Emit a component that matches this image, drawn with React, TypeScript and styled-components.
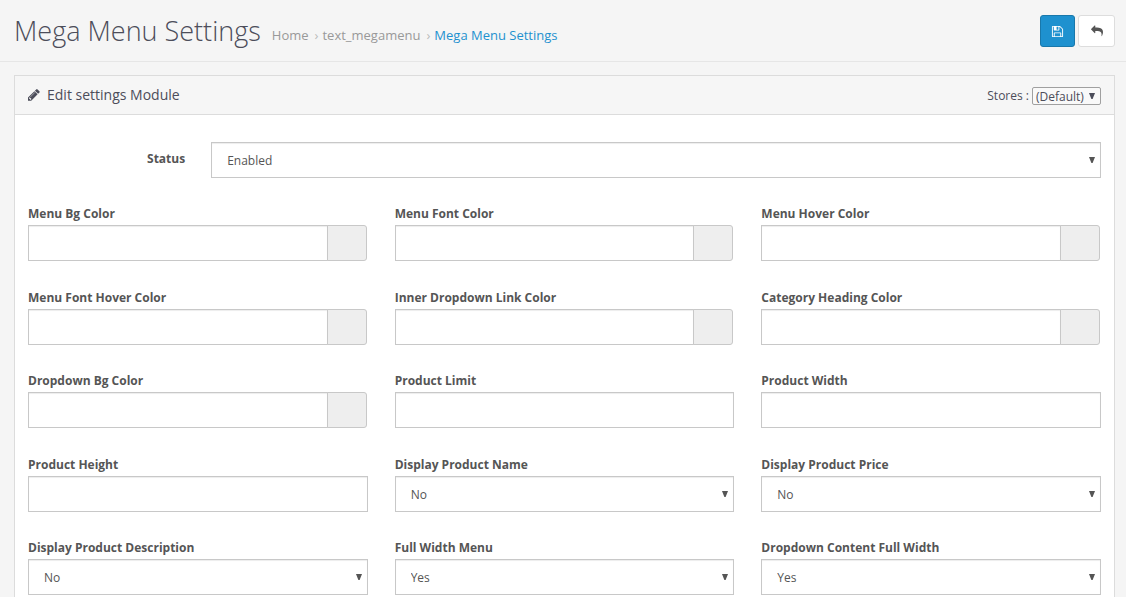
import React, { useId, useState } from "react";
import styled, { createGlobalStyle } from "styled-components";

const GlobalStyle = createGlobalStyle`
  *, *::before, *::after { box-sizing: border-box; }
  body {
    margin: 0;
    background: #f5f5f5;
    color: #4c4d5a;
    font-family: "Open Sans", "Noto Sans", sans-serif;
    font-size: 12px;
    line-height: 18px;
  }
  input, select, button { font-family: inherit; }
`;

const PageHeader = styled.header`
  display: flex;
  align-items: flex-start;
  justify-content: space-between;
  padding: 15px 11px 14px 14px;
  border-bottom: 1px solid #e6e6e6;
  margin-bottom: 13px;
`;

const Heading = styled.div`
  display: flex;
  flex-wrap: wrap;
  align-items: flex-start;
  column-gap: 11px;
`;

const Title = styled.h1`
  margin: 0;
  font-size: 27px;
  font-weight: 300;
  line-height: 32px;
`;

const Crumbs = styled.ol`
  display: flex;
  margin: 0;
  padding: 11px 0 0;
  list-style: none;
  font-size: 13px;
`;

const Crumb = styled.li`
  & + &::before {
    content: "›";
    padding: 0 4px 0 6px;
    color: #bbb;
  }
`;

const CrumbLink = styled.a<{ $current?: boolean }>`
  color: ${(p) => (p.$current ? "#1e91cf" : "#999")};
  text-decoration: none;
`;

const Actions = styled.div`
  display: flex;
  gap: 3px;
`;

const IconButton = styled.button<{ $primary?: boolean }>`
  display: flex;
  align-items: center;
  justify-content: center;
  width: ${(p) => (p.$primary ? 35 : 37)}px;
  height: 32px;
  padding: 0;
  border: 1px solid ${(p) => (p.$primary ? "#1978ab" : "#ddd")};
  border-radius: 3px;
  background: ${(p) => (p.$primary ? "#1e91cf" : "#fff")};
  color: ${(p) => (p.$primary ? "#fff" : "#555")};
  cursor: pointer;
`;

const Panel = styled.main`
  margin: 0 11px 0 14px;
  border: 1px solid #dcdcdc;
  background: #fff;
`;

const PanelHeading = styled.div`
  display: flex;
  align-items: center;
  justify-content: space-between;
  height: 39px;
  padding: 0 13px;
  border-bottom: 1px solid #dcdcdc;
  background: #f6f6f6;
`;

const PanelTitle = styled.h2`
  display: flex;
  align-items: center;
  gap: 7px;
  margin: 0;
  font-size: 14px;
  font-weight: 400;
  line-height: 20px;
`;

const StorePicker = styled.div`
  display: flex;
  align-items: center;
  gap: 3px;
  padding-top: 2px;
`;

const PanelBody = styled.form`
  padding: 27px 13px 14px;
`;

const StatusRow = styled.div`
  display: grid;
  grid-template-columns: 1fr 5fr;
  margin: 0 -13px 27px;

  > * {
    margin: 0 13px;
  }
`;

const StatusLabel = styled.label`
  padding-top: 8px;
  color: #555;
  font-weight: 700;
  text-align: right;
`;

const Fields = styled.div`
  display: grid;
  grid-template-columns: repeat(3, 1fr);
  grid-auto-rows: 84px 83px;
  column-gap: 27px;
`;

const FieldBox = styled.div`
  min-width: 0;
`;

const FieldLabel = styled.label`
  display: block;
  margin-bottom: 2px;
  color: #555;
  font-weight: 700;
`;

const TextInput = styled.input`
  display: block;
  flex: 1;
  width: 100%;
  min-width: 0;
  height: 36px;
  padding: 8px 13px;
  border: 1px solid #c8c8c8;
  border-radius: 0;
  background: #fff;
  box-shadow: inset 0 1px 1px rgba(0, 0, 0, 0.075);
  color: #555;
  font-size: 12px;
`;

const ColorGroup = styled.div`
  display: flex;
  padding-right: 1px;
`;

const Swatch = styled.span`
  width: 40px;
  height: 36px;
  margin-left: -1px;
  border: 1px solid #c8c8c8;
  border-radius: 0 3px 3px 0;
  background: #eee;
  z-index: 1;
`;

const SelectWrap = styled.div<{ $compact?: boolean }>`
  position: relative;
  color: ${(p) => (p.$compact ? "#4c4d5a" : "#555")};

  svg {
    position: absolute;
    top: ${(p) => (p.$compact ? 6 : 15)}px;
    right: 6px;
    pointer-events: none;
  }
`;

const SelectControl = styled.select<{ $compact?: boolean }>`
  display: block;
  width: ${(p) => (p.$compact ? "69px" : "100%")};
  height: ${(p) => (p.$compact ? 18 : 36)}px;
  padding: ${(p) => (p.$compact ? "0 3px" : "0 15px")};
  border: 1px solid ${(p) => (p.$compact ? "#a0a0a0" : "#c8c8c8")};
  border-radius: ${(p) => (p.$compact ? 2 : 0)}px;
  background: ${(p) => (p.$compact ? "#f9f9f9" : "#fff")};
  box-shadow: ${(p) => (p.$compact ? "none" : "inset 0 1px 1px rgba(0, 0, 0, 0.075)")};
  color: inherit;
  font-size: 12px;
  appearance: none;
`;

const icons = {
  save: {
    box: "0 0 1792 1792",
    path: "M512 1536h768v-384h-768v384zm896 0h128v-896q0-14-10-38.5t-20-34.5l-281-281q-10-10-34-20t-39-10v416q0 40-28 68t-68 28h-576q-40 0-68-28t-28-68v-416h-128v1280h128v-416q0-40 28-68t68-28h832q40 0 68 28t28 68v416zm-384-928v-320q0-13-9.5-22.5t-22.5-9.5h-192q-13 0-22.5 9.5t-9.5 22.5v320q0 13 9.5 22.5t22.5 9.5h192q13 0 22.5-9.5t9.5-22.5zm640 32v928q0 40-28 68t-68 28h-1344q-40 0-68-28t-28-68v-1344q0-40 28-68t68-28h928q40 0 88 20t76 48l280 280q28 28 48 76t20 88z",
  },
  pencil: {
    box: "128 138 1556 1556",
    path: "M491 1536l91-91-235-235-91 91v107h128v128h107zm523-928q0-22-22-22-10 0-17 7l-542 542q-7 7-7 17 0 22 22 22 10 0 17-7l542-542q7-7 7-17zm-54-192l416 416-832 832h-416v-416zm683 96q0 53-37 90l-166 166-416-416 166-165q36-38 90-38 53 0 91 38l235 234q37 39 37 91z",
  },
  reply: {
    box: "0 0 1792 1792",
    path: "M1792 1120q0 166-127 451-3 7-10.5 24t-13.5 30-13 22q-12 17-28 17-15 0-23.5-10t-8.5-25q0-9 2.5-26.5t2.5-23.5q5-68 5-123 0-101-17.5-181t-48.5-138.5-80-101-105.5-69.5-133-42.5-154-21.5-175.5-6h-224v256q0 26-19 45t-45 19-45-19l-512-512q-19-19-19-45t19-45l512-512q19-19 45-19t45 19 19 45v256h224q713 0 875 403 53 134 53 333z",
  },
};

function Icon({ name, size }: { name: keyof typeof icons; size: number }) {
  return (
    <svg width={size} height={size} viewBox={icons[name].box} fill="currentColor" aria-hidden="true">
      <path d={icons[name].path} />
    </svg>
  );
}

interface DropdownProps {
  id: string;
  options: string[];
  initial: string;
  compact?: boolean;
}

function Dropdown({ id, options, initial, compact }: DropdownProps) {
  const [value, setValue] = useState(initial);
  return (
    <SelectWrap $compact={compact}>
      <SelectControl id={id} $compact={compact} value={value} onChange={(e) => setValue(e.target.value)}>
        {options.map((o) => (
          <option key={o}>{o}</option>
        ))}
      </SelectControl>
      <svg width="6" height="6" viewBox="0 0 6 6" fill="currentColor" aria-hidden="true">
        <path d="M0 0H6L3.6 6H2.4Z" />
      </svg>
    </SelectWrap>
  );
}

interface FieldSpec {
  label: string;
  kind: "color" | "text" | "select";
  value?: string;
}

const fields: FieldSpec[] = [
  { label: "Menu Bg Color", kind: "color" },
  { label: "Menu Font Color", kind: "color" },
  { label: "Menu Hover Color", kind: "color" },
  { label: "Menu Font Hover Color", kind: "color" },
  { label: "Inner Dropdown Link Color", kind: "color" },
  { label: "Category Heading Color", kind: "color" },
  { label: "Dropdown Bg Color", kind: "color" },
  { label: "Product Limit", kind: "text" },
  { label: "Product Width", kind: "text" },
  { label: "Product Height", kind: "text" },
  { label: "Display Product Name", kind: "select", value: "No" },
  { label: "Display Product Price", kind: "select", value: "No" },
  { label: "Display Product Description", kind: "select", value: "No" },
  { label: "Full Width Menu", kind: "select", value: "Yes" },
  { label: "Dropdown Content Full Width", kind: "select", value: "Yes" },
];

function Field({ label, kind, value = "" }: FieldSpec) {
  const id = useId();
  return (
    <FieldBox>
      <FieldLabel htmlFor={id}>{label}</FieldLabel>
      {kind === "color" && (
        <ColorGroup>
          <TextInput id={id} type="text" />
          <Swatch />
        </ColorGroup>
      )}
      {kind === "text" && <TextInput id={id} type="text" />}
      {kind === "select" && <Dropdown id={id} options={["Yes", "No"]} initial={value} />}
    </FieldBox>
  );
}

export default function App() {
  return (
    <>
      <GlobalStyle />
      <PageHeader>
        <Heading>
          <Title>Mega Menu Settings</Title>
          <nav aria-label="Breadcrumb">
            <Crumbs>
              <Crumb><CrumbLink href="#home">Home</CrumbLink></Crumb>
              <Crumb><CrumbLink href="#megamenu">text_megamenu</CrumbLink></Crumb>
              <Crumb><CrumbLink href="#settings" $current aria-current="page">Mega Menu Settings</CrumbLink></Crumb>
            </Crumbs>
          </nav>
        </Heading>
        <Actions>
          <IconButton type="submit" form="settings-form" $primary aria-label="Save"><Icon name="save" size={13} /></IconButton>
          <IconButton type="button" aria-label="Back"><Icon name="reply" size={12} /></IconButton>
        </Actions>
      </PageHeader>
      <Panel>
        <PanelHeading>
          <PanelTitle><Icon name="pencil" size={12} />Edit settings Module</PanelTitle>
          <StorePicker>
            <label htmlFor="store">Stores :</label>
            <Dropdown id="store" options={["(Default)"]} initial="(Default)" compact />
          </StorePicker>
        </PanelHeading>
        <PanelBody id="settings-form" onSubmit={(e) => e.preventDefault()}>
          <StatusRow>
            <StatusLabel htmlFor="status">Status</StatusLabel>
            <Dropdown id="status" options={["Enabled", "Disabled"]} initial="Enabled" />
          </StatusRow>
          <Fields>
            {fields.map((f) => (
              <Field key={f.label} {...f} />
            ))}
          </Fields>
        </PanelBody>
      </Panel>
    </>
  );
}
